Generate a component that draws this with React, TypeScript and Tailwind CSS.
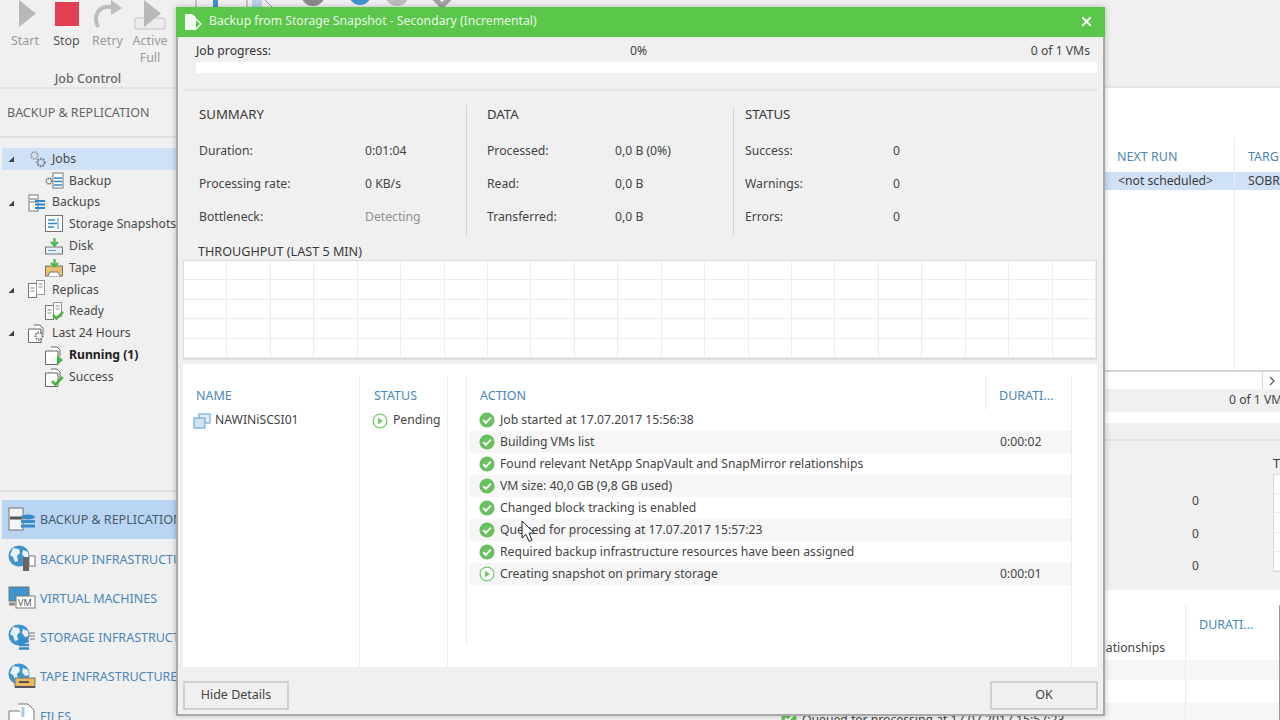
import type { ReactNode } from "react";
import { X } from "lucide-react";

const font = { fontFamily: '"Noto Sans", "Open Sans", sans-serif' };

function Arrow() {
  return (
    <svg width="8" height="8" viewBox="0 0 8 8" className="shrink-0">
      <path d="M7 1.5V7H1.5z" fill="#444" />
    </svg>
  );
}

function CheckIcon() {
  return (
    <svg width="16" height="16" viewBox="0 0 16 16" className="shrink-0">
      <circle cx="8" cy="8" r="7.6" fill="#69c05f" />
      <path d="M4.2 8.2l2.7 2.7 4.9-5.2" fill="none" stroke="#fff" strokeWidth="1.9" />
    </svg>
  );
}

function PendingIcon() {
  return (
    <svg width="16" height="16" viewBox="0 0 16 16" className="shrink-0">
      <circle cx="8" cy="8" r="6.9" fill="#fff" stroke="#79c96f" strokeWidth="1.3" />
      <path d="M6 4.4L11 8l-5 3.6z" fill="#79c96f" />
    </svg>
  );
}

function Gears() {
  return (
    <svg width="20" height="20" viewBox="0 0 20 20">
      <circle cx="6.5" cy="6.5" r="3.4" fill="none" stroke="#999" strokeWidth="2" strokeDasharray="1.6 1" />
      <circle cx="13" cy="13.5" r="3.6" fill="none" stroke="#777" strokeWidth="2.2" strokeDasharray="1.6 1" />
    </svg>
  );
}

function JobDoc() {
  return (
    <svg width="20" height="18" viewBox="0 0 20 18">
      <circle cx="4" cy="9" r="2.8" fill="none" stroke="#666" strokeWidth="1.6" strokeDasharray="1.4 .9" />
      <rect x="8" y="1" width="10" height="15" fill="#fff" stroke="#777" />
      <path d="M9 6h8M9 9.5h8M9 13h8" stroke="#2f86c8" strokeWidth="1.6" />
    </svg>
  );
}

function BackupsIcon() {
  return (
    <svg width="18" height="18" viewBox="0 0 18 18">
      <rect x="1" y="1" width="9" height="16" fill="#fff" stroke="#777" />
      <path d="M2 5h7M2 8h7" stroke="#666" />
      <path d="M7 7h10M7 10.5h10M7 14h10" stroke="#2f86c8" strokeWidth="1.8" />
    </svg>
  );
}

function SnapshotIcon() {
  return (
    <svg width="19" height="18" viewBox="0 0 19 18">
      <rect x=".5" y=".5" width="17" height="16" fill="#fff" stroke="#777" />
      <path d="M3 5h7M3 8.5h9M3 12h6" stroke="#2f86c8" strokeWidth="1.5" />
      <path d="M13 3v11" stroke="#9bc3e3" strokeWidth="2" />
    </svg>
  );
}

function DiskIcon() {
  return (
    <svg width="19" height="18" viewBox="0 0 19 18">
      <path d="M9.5 1v6M6 5l3.5 3.5L13 5" fill="none" stroke="#4db548" strokeWidth="2.2" />
      <rect x=".5" y="10" width="17" height="7" fill="#e4eef5" stroke="#777" />
      <path d="M3 13.5h8" stroke="#6d9bbd" />
    </svg>
  );
}

function TapeIcon() {
  return (
    <svg width="19" height="18" viewBox="0 0 19 18">
      <rect x=".5" y="7" width="17" height="10" fill="#e9bf6e" stroke="#777" />
      <path d="M9.5 0v6M6 4l3.5 3.5L13 4" fill="none" stroke="#4db548" strokeWidth="2.2" />
      <path d="M3 17l2-4h8l2 4" fill="#fff" stroke="#777" />
    </svg>
  );
}

function ReplicaIcon({ check }: { check?: boolean }) {
  return (
    <svg width="19" height="19" viewBox="0 0 19 19">
      <rect x=".5" y="3.5" width="8" height="14" fill="#fff" stroke="#777" />
      <rect x="8.5" y=".5" width="8" height="14" fill="#fff" stroke="#999" />
      <path d="M2.5 8h4M2.5 11h4M10.5 4h4M10.5 7h4" stroke="#888" />
      {check && <path d="M8 13l3.4 3.6L18 10" fill="none" stroke="#4db548" strokeWidth="2.6" />}
    </svg>
  );
}

function SessionDoc({ mark }: { mark?: "gear" | "play" | "check" }) {
  return (
    <svg width="19" height="19" viewBox="0 0 19 19">
      <path d="M6 1h6l3 3v6M.5 5v13.5H13V5z" fill="#fff" stroke="#666" />
      {mark === "gear" && (
        <circle cx="11" cy="12" r="3.6" fill="#f0f0f0" stroke="#777" strokeWidth="2" strokeDasharray="1.5 1" />
      )}
      {mark === "play" && <path d="M12 9l6 5-6 5z" fill="#41b33c" />}
      {mark === "check" && <path d="M7 13l3.4 3.6L17.6 9" fill="none" stroke="#41b33c" strokeWidth="2.6" />}
    </svg>
  );
}

function NavGlobe({ children }: { children?: ReactNode }) {
  return (
    <svg width="28" height="28" viewBox="0 0 28 28">
      <circle cx="11" cy="11" r="10.5" fill="#3f93cf" />
      <path d="M5 3l6 1 1 4-3 3 1 5-3 1-2-5-3-2zM15 5l5 2 1 5-4 1-3-4z" fill="#e9f2f8" />
      {children}
    </svg>
  );
}

function TreeRow({ label, icon, child, bold, selected, arrow }: {
  label: string;
  icon: ReactNode;
  child?: boolean;
  bold?: boolean;
  selected?: boolean;
  arrow?: boolean;
}) {
  return (
    <div
      className={`flex h-[21.82px] items-center whitespace-nowrap text-[12.2px] ${selected ? "bg-[#cfe1f6]" : ""} ${bold ? "font-bold text-[#222]" : "text-[#484848]"}`}
    >
      <span className="flex w-[24px] shrink-0 justify-start pl-[5px]">{arrow && <Arrow />}</span>
      {child && <span className="w-[17px] shrink-0" />}
      <span className="flex w-[26px] shrink-0 justify-start pl-[2px]">{icon}</span>
      <span>{label}</span>
    </div>
  );
}

function NavRow({ label, icon, selected }: { label: string; icon: ReactNode; selected?: boolean }) {
  return (
    <div
      className={`flex h-[39.3px] items-center gap-[4px] whitespace-nowrap pl-[6px] text-[12.5px] ${selected ? "bg-[#b8d5f3] text-[#4a5a6c]" : "text-[#4b86b8]"}`}
    >
      <span className="flex w-[28px] shrink-0">{icon}</span>
      <span className="pt-[2px]">{label}</span>
    </div>
  );
}

function StatCol({ title, rows, valueCol }: {
  title: string;
  rows: [string, string, boolean?][];
  valueCol: string;
}) {
  return (
    <div className="h-[132px]">
      <div className="h-[30px] text-[13.2px] text-[#3a3a3a]">{title}</div>
      {rows.map(([k, v, dim]) => (
        <div key={k} className={`grid h-[32.8px] items-center ${valueCol}`}>
          <span>{k}</span>
          <span className={dim ? "text-[#8f8f8f]" : ""}>{v}</span>
        </div>
      ))}
    </div>
  );
}

const actions: [string, string, boolean?][] = [
  ["Job started at 17.07.2017 15:56:38", ""],
  ["Building VMs list", "0:00:02"],
  ["Found relevant NetApp SnapVault and SnapMirror relationships", ""],
  ["VM size: 40,0 GB (9,8 GB used)", ""],
  ["Changed block tracking is enabled", ""],
  ["Queued for processing at 17.07.2017 15:57:23", ""],
  ["Required backup infrastructure resources have been assigned", ""],
  ["Creating snapshot on primary storage", "0:00:01", true],
];

const graphCells = Array.from({ length: 105 });
const smallGraphCells = Array.from({ length: 5 });

function Dialog() {
  return (
    <div className="absolute left-[176px] top-[7px] flex h-[709px] w-[929px] flex-col border-x-2 border-b-2 border-[#a9a9a9] bg-[#f0f0f0] text-[12.2px] text-[#444] shadow-[0_0_6px_rgba(0,0,0,0.25)]">
      <div className="-mx-[2px] flex h-[30px] shrink-0 items-center bg-[#5ac64a] pb-[1px] pl-[8px] pr-[11px] text-white">
        <svg width="20" height="18" viewBox="0 0 20 18" className="shrink-0">
          <path d="M1.5 1.5h7l3 3v12h-10z" fill="#f4fbf2" stroke="#fff" />
          <path d="M12 6l5 5-5 5" fill="none" stroke="#fff" strokeWidth="1.3" />
        </svg>
        <span className="ml-[5px] text-[#e9f7e6]">Backup from Storage Snapshot - Secondary (Incremental)</span>
        <X size={15} strokeWidth={3} className="ml-auto" />
      </div>

      <div className="mx-[5px] flex h-[54px] shrink-0 flex-col border-b-2 border-[#e4e4e4] pl-[13px] pr-[8px]">
        <div className="grid h-[25px] grid-cols-[434px_auto_1fr] items-center pt-[4px]">
          <span className="text-[#333]">Job progress:</span>
          <span>0%</span>
          <span className="text-right">0 of 1 VMs</span>
        </div>
        <div className="h-[11px] w-[901px] bg-white" />
      </div>

      <div className="ml-[21px] mt-[14px] grid shrink-0 grid-cols-[267px_267px_1fr]">
        <StatCol
          title="SUMMARY"
          valueCol="grid-cols-[166px_1fr]"
          rows={[
            ["Duration:", "0:01:04"],
            ["Processing rate:", "0 KB/s"],
            ["Bottleneck:", "Detecting", true],
          ]}
        />
        <div className="border-l border-[#d4d4d4] pl-[20px]">
          <StatCol
            title="DATA"
            valueCol="grid-cols-[128px_1fr]"
            rows={[
              ["Processed:", "0,0 B (0%)"],
              ["Read:", "0,0 B"],
              ["Transferred:", "0,0 B"],
            ]}
          />
        </div>
        <div className="mt-[3px] h-[127px] border-l border-[#d4d4d4] pl-[11px]">
          <div className="-mt-[3px]">
            <StatCol
              title="STATUS"
              valueCol="grid-cols-[148px_1fr]"
              rows={[
                ["Success:", "0"],
                ["Warnings:", "0"],
                ["Errors:", "0"],
              ]}
            />
          </div>
        </div>
      </div>

      <div className="ml-[20px] mt-[6px] h-[17px] shrink-0 text-[12.6px] leading-[17px] text-[#3a3a3a]">THROUGHPUT (LAST 5 MIN)</div>

      <div className="ml-[5px] grid h-[100px] w-[914px] shrink-0 grid-cols-21 grid-rows-5 border border-b-2 border-[#dcdcdc] bg-white">
        {graphCells.map((_, i) => (
          <div key={i} className="border-b border-r border-[#ececec]" />
        ))}
      </div>

      <div className="mx-[5px] mt-[4px] grid h-[303px] w-[914px] shrink-0 grid-cols-[177px_88px_18px_518px_87px_1fr] bg-white pt-[12px]">
        <div className="border-r border-[#ececec] pl-[13px]">
          <div className="flex h-[33.5px] items-center pt-[7px] text-[12.5px] text-[#4b86b8]">NAME</div>
          <div className="-ml-[3px] flex h-[22px] items-center gap-[4px]">
            <svg width="18" height="16" viewBox="0 0 18 16" className="shrink-0">
              <rect x="6" y="1" width="11" height="9" fill="#e4eff8" stroke="#5d9ccf" />
              <rect x="1" y="5" width="11" height="10" fill="#cfe3f4" stroke="#5d9ccf" />
            </svg>
            <span>NAWINiSCSI01</span>
          </div>
        </div>
        <div className="border-r border-[#ececec] pl-[14px]">
          <div className="flex h-[33.5px] items-center pt-[7px] text-[12.5px] text-[#4b86b8]">STATUS</div>
          <div className="-ml-[2px] flex h-[22px] items-center gap-[5px] whitespace-nowrap">
            <PendingIcon />
            <span>Pending</span>
          </div>
        </div>
        <div />
        <div className="col-span-2 mb-[22px] border-l border-[#ececec]">
          <div className="grid h-[33.5px] grid-cols-[518px_1fr] items-center text-[12.5px] text-[#4b86b8]">
            <span className="pl-[13px] pt-[6px]">ACTION</span>
            <span className="h-full border-l border-[#ececec] pl-[13px] pt-[6px] leading-[28px]">DURATI...</span>
          </div>
          {actions.map(([text, time, running], i) => (
            <div
              key={text}
              className={`ml-[3px] grid h-[21.9px] grid-cols-[515px_1fr] items-center ${i % 2 === 1 ? "bg-[#f6f6f6]" : ""}`}
            >
              <div className="flex items-center gap-[5px] pl-[9px]">
                {running ? <PendingIcon /> : <CheckIcon />}
                <span className="whitespace-nowrap">{text}</span>
              </div>
              <span className="pl-[15px]">{time}</span>
            </div>
          ))}
        </div>
        <div className="border-l border-[#ececec]" />
      </div>

      <div className="flex flex-1 items-end justify-between px-[5px] pb-[4px]">
        <div className="flex h-[29px] w-[106px] items-center justify-center border-2 border-[#d0d0d0] bg-[#f0f0f0] text-[12.5px]">Hide Details</div>
        <div className="flex h-[29px] w-[108px] items-center justify-center border-2 border-[#d0d0d0] bg-[#f0f0f0] text-[12.5px]">OK</div>
      </div>
    </div>
  );
}

export default function App() {
  return (
    <div className="relative flex h-[720px] w-[1280px] overflow-hidden bg-[#f0f0f0] text-[#444]" style={font}>
      {/* left column */}
      <div className="flex w-[176px] shrink-0 flex-col overflow-hidden">
        <div className="h-[89px] shrink-0 border-b-2 border-[#e2e2e2]">
          <div className="grid h-[68px] grid-cols-[50px_33px_49px_36px] text-center text-[12.5px] leading-[17px]">
            <div className="flex flex-col items-center text-[#9a9a9a]">
              <svg width="18" height="28" viewBox="0 0 18 28" className="mb-[4px] ml-[5px]"><path d="M0 0l17 13.5L0 27z" fill="#b8b8b8" /></svg>
              Start
            </div>
            <div className="flex flex-col items-center text-[#555]">
              <div className="mb-[6px] mt-[2px] h-[24px] w-[24px] bg-[#e0404f]" />
              Stop
            </div>
            <div className="flex flex-col items-center text-[#9a9a9a]">
              <svg width="32" height="28" viewBox="0 0 32 28" className="mb-[4px] shrink-0">
                <path d="M6 27C0 14 8 5 20 7" fill="none" stroke="#bdbdbd" strokeWidth="4" />
                <path d="M19 0l11 8-11 7z" fill="#bdbdbd" />
              </svg>
              Retry
            </div>
            <div className="flex flex-col items-center leading-[17px] text-[#9a9a9a]">
              <svg width="32" height="32" viewBox="0 0 32 32" className="shrink-0">
                <rect x="1" y="18" width="30" height="11" rx="1" fill="#ececec" stroke="#c4c4c4" />
                <path d="M10 0l17 13.5L10 27z" fill="#b8b8b8" />
              </svg>
              <span>Active</span>
              <span>Full</span>
            </div>
          </div>
          <div className="pt-[2px] text-center text-[12.5px] font-medium text-[#666]">Job Control</div>
        </div>
        <div className="flex h-[49px] shrink-0 items-center border-b-2 border-[#e2e2e2] pt-[1px] pl-[7px] text-[12.5px] text-[#666]">BACKUP &amp; REPLICATION</div>
        <div className="flex h-[352px] shrink-0 flex-col pl-[2px] pt-[10px]">
          <TreeRow arrow selected label="Jobs" icon={<Gears />} />
          <TreeRow child label="Backup" icon={<JobDoc />} />
          <TreeRow arrow label="Backups" icon={<BackupsIcon />} />
          <TreeRow child label="Storage Snapshots" icon={<SnapshotIcon />} />
          <TreeRow child label="Disk" icon={<DiskIcon />} />
          <TreeRow child label="Tape" icon={<TapeIcon />} />
          <TreeRow arrow label="Replicas" icon={<ReplicaIcon />} />
          <TreeRow child label="Ready" icon={<ReplicaIcon check />} />
          <TreeRow arrow label="Last 24 Hours" icon={<SessionDoc mark="gear" />} />
          <TreeRow child bold label="Running (1)" icon={<SessionDoc mark="play" />} />
          <TreeRow child label="Success" icon={<SessionDoc mark="check" />} />
        </div>
        <div className="flex flex-1 flex-col border-t-2 border-[#e2e2e2] pl-[2px] pt-[8px]">
          <NavRow
            selected
            label="BACKUP & REPLICATION"
            icon={
              <svg width="28" height="28" viewBox="0 0 28 28">
                <rect x="1" y="2" width="14" height="22" fill="#f4f4f4" stroke="#777" />
                <path d="M2 12h12" stroke="#555" strokeWidth="3" />
                <ellipse cx="20" cy="11" rx="7" ry="2.5" fill="#3a8ac6" />
                <path d="M13 15.5h14M13 20h14" stroke="#3a8ac6" strokeWidth="3" />
              </svg>
            }
          />
          <NavRow
            label="BACKUP INFRASTRUCTURE"
            icon={<NavGlobe><rect x="15" y="12" width="6" height="14" fill="#666" /><rect x="21" y="11" width="6" height="10" fill="#fff" stroke="#777" /></NavGlobe>}
          />
          <NavRow
            label="VIRTUAL MACHINES"
            icon={
              <svg width="28" height="28" viewBox="0 0 28 28">
                <rect x="1" y="3" width="20" height="14" fill="#3f93cf" stroke="#777" />
                <rect x="8" y="12" width="19" height="12" fill="#fff" stroke="#777" />
                <path d="M1 20h6" stroke="#888" strokeWidth="3" />
                <text x="10" y="22" fontSize="9" fill="#555" fontFamily="Noto Sans">VM</text>
              </svg>
            }
          />
          <NavRow
            label="STORAGE INFRASTRUCTURE"
            icon={<NavGlobe><ellipse cx="16" cy="17" rx="5" ry="2" fill="#3a8ac6" /><path d="M11 21h10M11 24.5h10" stroke="#3a8ac6" strokeWidth="2.4" /><path d="M20 9h7M20 12h7M22 15h5" stroke="#777" /></NavGlobe>}
          />
          <NavRow
            label="TAPE INFRASTRUCTURE"
            icon={<NavGlobe><rect x="7" y="15" width="20" height="9" fill="#e9b95f" stroke="#777" /><path d="M11 19h10" stroke="#555" strokeWidth="2" /><path d="M7 24h20" stroke="#555" strokeWidth="2" /></NavGlobe>}
          />
          <NavRow
            label="FILES"
            icon={
              <svg width="28" height="28" viewBox="0 0 28 28">
                <path d="M1 9h10l4 4v14H1z" fill="#fff" stroke="#777" />
                <path d="M10 2h10l6 6v14H15" fill="#fff" stroke="#777" />
                <path d="M15 5v10" stroke="#a6c8e4" strokeWidth="3" />
              </svg>
            }
          />
        </div>
      </div>

      {/* main column, mostly behind the dialog */}
      <div className="flex min-w-0 flex-1 flex-col overflow-hidden text-[12.2px]">
        <div className="h-[88px] shrink-0 overflow-hidden border-b-2 border-[#e6e6e6]">
          <svg width="300" height="8" viewBox="0 0 300 8">
            <path d="M20 0v8M71 0v8" stroke="#999" />
            <rect x="37" y="0" width="5" height="8" fill="#3f93cf" />
            <rect x="76" y="0" width="10" height="8" fill="#b7d3ec" />
            <path d="M89 0l7 7" stroke="#999" />
            <circle cx="137" cy="-6" r="12" fill="#8b8b8b" />
            <circle cx="184" cy="-6" r="11" fill="#3f93cf" />
            <circle cx="221" cy="-6" r="12" fill="#bdbdbd" />
            <path d="M254 -6l12 12 12-12" fill="none" stroke="#a2a2a2" strokeWidth="5" />
          </svg>
        </div>

        <div className="flex h-[284px] shrink-0 flex-col border-b-2 border-[#d4d4d4] bg-white pl-[929px]">
          <div className="grid flex-1 grid-cols-[129px_1fr] pt-[49px]">
            <div className="pl-[12px]">
              <div className="flex h-[35px] items-center pt-[5px] text-[12.5px] text-[#4b86b8]">NEXT RUN</div>
              <div className="-ml-[12px] flex h-[18px] items-center bg-[#cfe1f6] pl-[13px] text-[#3a3a3a]">&lt;not scheduled&gt;</div>
            </div>
            <div className="overflow-hidden whitespace-nowrap border-l border-[#ececec] pl-[13px]">
              <div className="flex h-[35px] items-center pt-[5px] text-[12.5px] text-[#4b86b8]">TARGET</div>
              <div className="-ml-[13px] flex h-[18px] items-center bg-[#cfe1f6] pl-[13px] text-[#3a3a3a]">SOBR</div>
            </div>
          </div>
        </div>
        <div className="flex h-[17px] shrink-0 items-center justify-end bg-white">
          <span className="flex h-full w-[18px] items-center justify-center border-l border-[#d4d4d4] text-[#666]">
            <svg width="8" height="10" viewBox="0 0 8 10"><path d="M2 1l4 4-4 4" fill="none" stroke="#555" strokeWidth="1.2" /></svg>
          </span>
        </div>
        <div className="flex h-[23px] shrink-0 items-center overflow-hidden whitespace-nowrap bg-[#f0f0f0] pl-[1053px]">0 of 1 VMs</div>
        <div className="h-[11px] shrink-0 bg-white" />
        <div className="h-[18px] shrink-0 border-b-2 border-[#e2e2e2]" />

        <div className="flex h-[149px] shrink-0 overflow-hidden pl-[929px]">
          <div className="flex w-[168px] shrink-0 flex-col pl-[87px] pt-[44px]">
            <div className="flex h-[32.5px] items-center">0</div>
            <div className="flex h-[32.5px] items-center">0</div>
            <div className="flex h-[32.5px] items-center">0</div>
          </div>
          <div className="w-[100px] shrink-0">
            <div className="h-[33px] whitespace-nowrap pt-[16px] text-[12.6px] leading-[14px] text-[#3a3a3a]">THROUGHPUT (LAST 5 MIN)</div>
            <div className="grid h-[98px] grid-rows-5 border border-[#dcdcdc] bg-white">
              {smallGraphCells.map((_, i) => (
                <div key={i} className="border-b border-[#ececec]" />
              ))}
            </div>
          </div>
        </div>

        <div className="grid flex-1 grid-cols-[1009px_94px_1fr] bg-white pt-[15px]">
          <div className="flex flex-col pt-[33px] text-right">
            <div className="h-[22px] whitespace-nowrap pr-[20px] leading-[20px]">Found relevant NetApp SnapVault and SnapMirror relationships</div>
            <div className="h-[20px] bg-[#f6f6f6]" />
            <div className="h-[23px]" />
            <div className="flex h-[17px] justify-start overflow-hidden bg-[#f6f6f6] pl-[605px] pt-[7px] leading-[20px]">
              <CheckIcon />
              <span className="ml-[5px] whitespace-nowrap">Queued for processing at 17.07.2017 15:57:23</span>
            </div>
          </div>
          <div className="flex flex-col border-l border-[#ececec]">
            <div className="h-[33px] pl-[13px] pt-[11px] text-[12.5px] text-[#4b86b8]">DURATI...</div>
            <div className="h-[22px]" />
            <div className="h-[20px] bg-[#f6f6f6]" />
            <div className="h-[23px]" />
            <div className="h-[17px] bg-[#f6f6f6]" />
          </div>
          <div className="border-l-2 border-[#9a9a9a]" />
        </div>
      </div>

      <Dialog />

      <svg width="16" height="24" viewBox="0 0 16 24" className="absolute left-[521px] top-[520px]">
        <path d="M1 1v17l4-3.6 3 7 3-1.3-3-7h5.4z" fill="#fff" stroke="#222" />
      </svg>
    </div>
  );
}
